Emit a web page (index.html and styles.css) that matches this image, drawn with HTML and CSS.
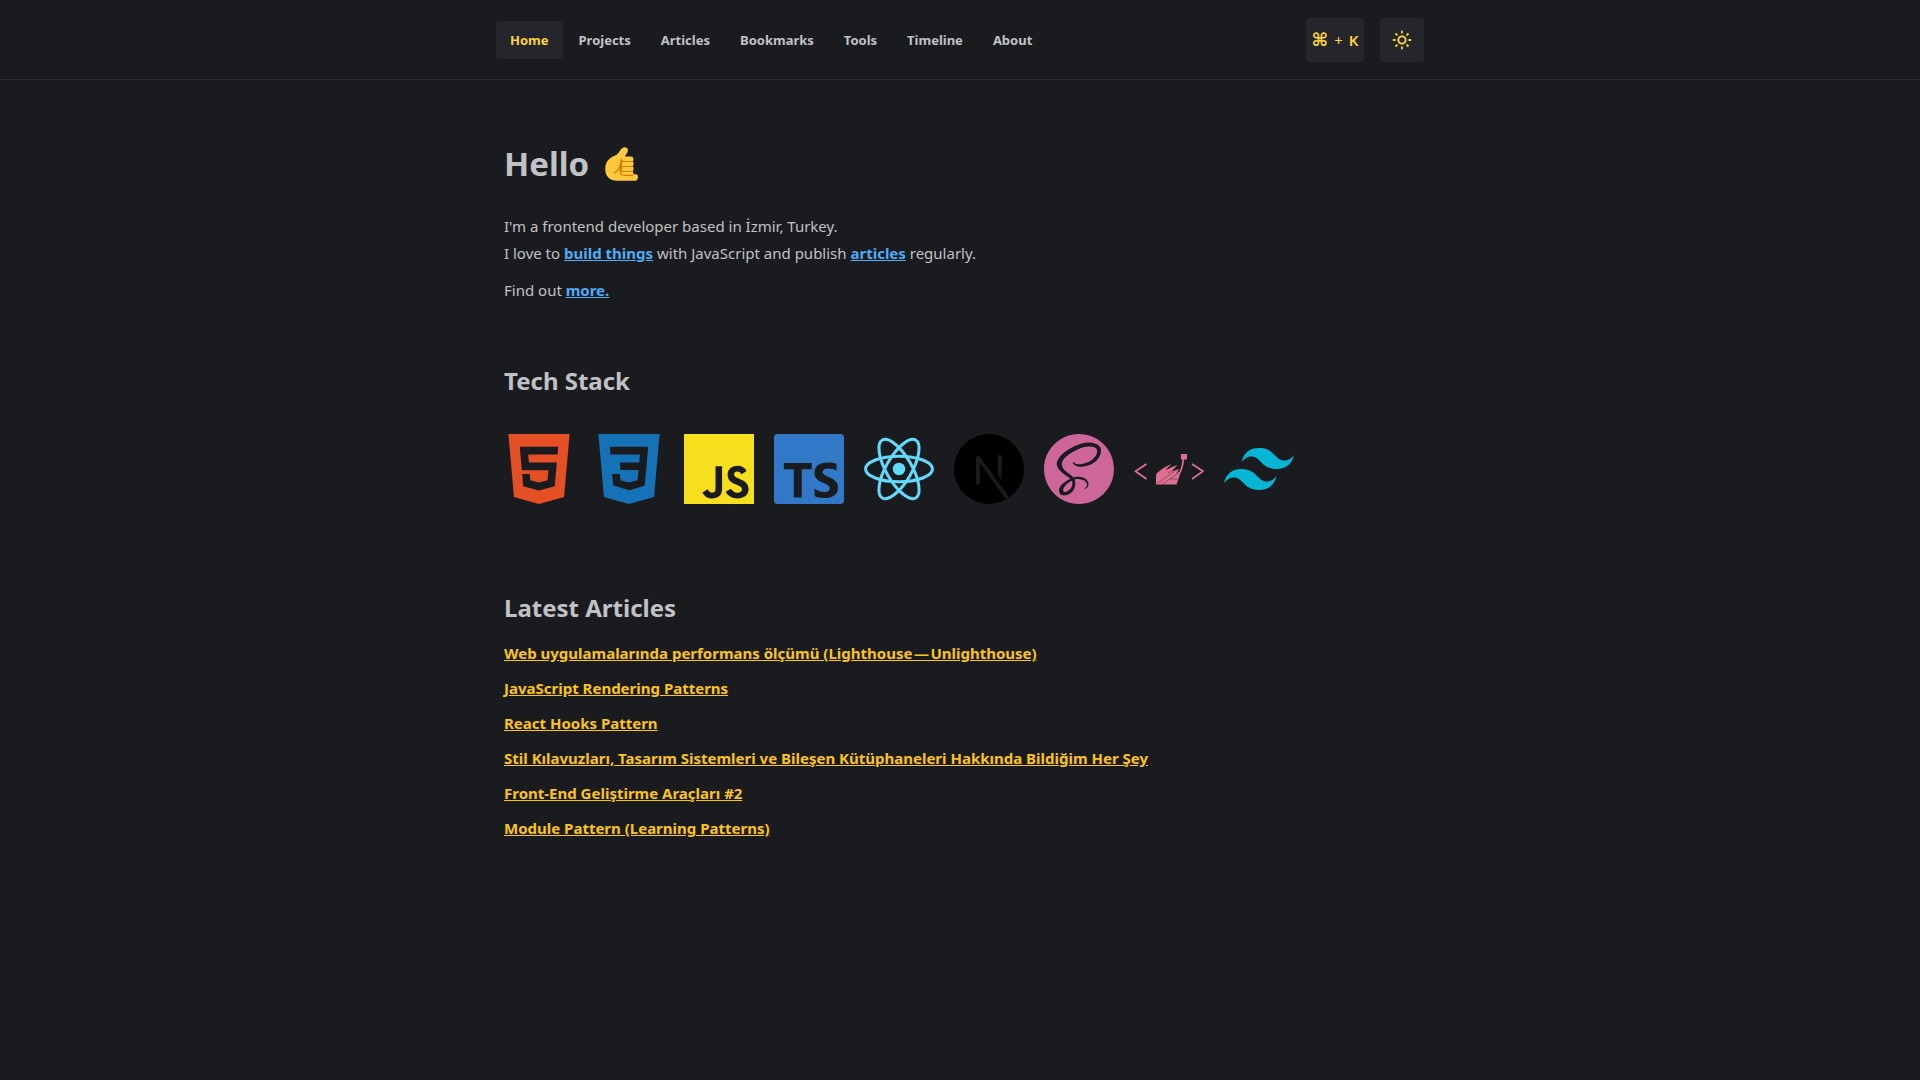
FILE: index.html
```html
<!DOCTYPE html>
<html lang="en">
<head>
<meta charset="utf-8">
<meta name="viewport" content="width=device-width, initial-scale=1">
<title>Home</title>
<link rel="stylesheet" href="styles.css">
</head>
<body>
<header class="header">
  <div class="container header-inner">
    <nav class="nav" aria-label="Main">
      <a class="nav-link active" href="#home" aria-current="page">Home</a>
      <a class="nav-link" href="#projects">Projects</a>
      <a class="nav-link" href="#articles">Articles</a>
      <a class="nav-link" href="#bookmarks">Bookmarks</a>
      <a class="nav-link" href="#tools">Tools</a>
      <a class="nav-link" href="#timeline">Timeline</a>
      <a class="nav-link" href="#about">About</a>
    </nav>
    <div class="actions">
      <button class="action shortcut" type="button" aria-label="Open command menu"><span class="cmd">⌘</span><span>+</span><b>K</b></button>
      <button class="action theme" type="button" aria-label="Toggle color scheme">
        <svg width="22" height="22" viewBox="0 0 24 24" fill="currentColor" aria-hidden="true"><path d="M6.993 12c0 2.761 2.246 5.007 5.007 5.007s5.007-2.246 5.007-5.007S14.761 6.993 12 6.993 6.993 9.239 6.993 12zM12 8.993c1.658 0 3.007 1.349 3.007 3.007S13.658 15.007 12 15.007 8.993 13.658 8.993 12 10.342 8.993 12 8.993zM10.998 19h2v3h-2zm0-17h2v3h-2zm-9 9h3v2h-3zm17 0h3v2h-3zM4.219 18.363l2.120-2.122 1.415 1.414-2.120 2.122zM16.240 6.344l2.122-2.122 1.414 1.414-2.122 2.122zM6.342 7.759 4.220 5.637l1.415-1.414 2.120 2.122zm13.434 10.605-1.414 1.414-2.122-2.122 1.414-1.414z"/></svg>
      </button>
    </div>
  </div>
</header>

<main class="container content">
  <section>
    <h1 class="title">Hello
      <svg class="hand" width="36" height="38" viewBox="0 0 36 38" role="img" aria-label="Call me hand">
        <path fill="#ffc83d" d="M16.500 6.500C18 3.500 20.500 1.800 23 2.500C25.300 3.300 25.300 5.500 24.300 7.500L21.800 11.500H28C30.800 11.500 31 15 29.700 16.200C30.900 17.500 30.900 19.800 29.700 21.200C30.900 22.600 30.900 25 29.700 26.200C30.400 27 30.500 28.200 30.200 29.200H33C35.800 29.600 35.700 35 32.500 35.700H14C7 35.700 2.300 31.500 2.300 24.500C2.300 18 4.500 14.800 9 12C12.500 10 15 9.500 16.500 6.500Z"/>
        <path fill="none" stroke="#d67d00" stroke-width="1.200" stroke-linecap="round" stroke-linejoin="round" d="M17.500 20C16.500 23 14 26.500 11.500 28M18.300 16.500H29.500M17.500 21.500H29.500M17 26.500H29.500M17 26.500C17 29.500 18.500 30.300 21 30.300H29.500"/>
        <path fill="#d67d00" d="M18 13L19.800 15.800L18.800 18.500L19.300 23.500L18.300 27L16.500 26L16.500 20Z"/>
      </svg>
    </h1>
    <p class="text">I'm a frontend developer based in İzmir, Turkey.<br>I love to <a class="link" href="#projects">build things</a> with JavaScript and publish <a class="link" href="#articles">articles</a> regularly.</p>
    <p class="text">Find out <a class="link" href="#about">more.</a></p>
  </section>

  <section class="stack">
    <h2 class="subtitle">Tech Stack</h2>
    <div class="logos">
      <svg class="logo" viewBox="0 0 24 24" role="img" aria-label="HTML5"><path fill="#e44f26" d="M1.500 0h21l-1.910 21.563L11.977 24l-8.564-2.438L1.500 0zm7.031 9.750l-.232-2.718 10.059.003.230-2.622L5.412 4.410l.698 8.010h9.126l-.326 3.426-2.910.804-2.955-.810-.188-2.110H6.248l.330 4.171L12 19.351l5.379-1.443.744-8.157H8.531z"/></svg>
      <svg class="logo" viewBox="0 0 24 24" role="img" aria-label="CSS3"><path fill="#1572b6" d="M1.500 0h21l-1.910 21.563L11.977 24l-8.565-2.438L1.500 0zm17.090 4.413L5.410 4.410l.213 2.622 10.125.002-.255 2.716h-6.640l.240 2.573h6.182l-.366 3.523-2.910.804-2.956-.810-.188-2.110h-2.610l.290 3.855L12 19.288l5.373-1.530L18.590 4.414z"/></svg>
      <svg class="logo" viewBox="0 0 256 256" role="img" aria-label="JavaScript"><path fill="#f7df1e" d="M0 0h256v256H0z"/><path fill="#1a1b1e" d="M67.312 213.932l19.590-11.856c3.780 6.701 7.218 12.371 15.465 12.371 7.905 0 12.890-3.092 12.890-15.120v-81.798h24.057v82.138c0 24.917-14.606 36.259-35.916 36.259-19.245 0-30.416-9.967-36.087-21.996M152.381 211.354l19.588-11.341c5.157 8.421 11.859 14.607 23.715 14.607 9.969 0 16.325-4.984 16.325-11.858 0-8.248-6.530-11.170-17.528-15.980l-6.013-2.579c-17.357-7.388-28.871-16.668-28.871-36.258 0-18.044 13.748-31.792 35.229-31.792 15.294 0 26.292 5.328 34.196 19.247L210.290 147.430c-4.125-7.389-8.591-10.310-15.465-10.310-7.046 0-11.514 4.468-11.514 10.310 0 7.217 4.468 10.141 14.778 14.608l6.014 2.577c20.450 8.765 31.966 17.700 31.966 37.804 0 21.654-17.012 33.510-39.867 33.510-22.339 0-36.774-10.654-43.819-24.574"/></svg>
      <svg class="logo" viewBox="0 0 24 24" role="img" aria-label="TypeScript"><path fill="#3178c6" d="M1.125 0C.502 0 0 .502 0 1.125v21.750C0 23.498.502 24 1.125 24h21.750c.623 0 1.125-.502 1.125-1.125V1.125C24 .502 23.498 0 22.875 0zm17.363 9.750c.612 0 1.154.037 1.627.111a6.380 6.380 0 0 1 1.306.340v2.458a3.950 3.950 0 0 0-.643-.361 5.093 5.093 0 0 0-.717-.260 5.453 5.453 0 0 0-1.426-.200c-.300 0-.573.028-.819.086a2.100 2.100 0 0 0-.623.242c-.170.104-.300.229-.393.374a.888.888 0 0 0-.140.490c0 .196.053.373.156.529.104.156.252.304.443.444s.423.276.696.410c.273.135.582.274.926.416.470.197.892.407 1.266.628.374.222.695.473.963.753.268.279.472.598.614.957.142.359.214.776.214 1.253 0 .657-.125 1.210-.373 1.656a3.033 3.033 0 0 1-1.012 1.085 4.380 4.380 0 0 1-1.487.596c-.566.120-1.163.180-1.790.180a9.916 9.916 0 0 1-1.840-.164 5.544 5.544 0 0 1-1.512-.493v-2.630a5.033 5.033 0 0 0 3.237 1.200c.333 0 .624-.030.872-.090.249-.060.456-.144.623-.250.166-.108.290-.234.373-.380a1.023 1.023 0 0 0-.074-1.089 2.120 2.120 0 0 0-.537-.500 5.597 5.597 0 0 0-.807-.444 27.720 27.720 0 0 0-1.007-.436c-.918-.383-1.602-.852-2.053-1.405-.450-.553-.676-1.222-.676-2.005 0-.614.123-1.141.369-1.582.246-.441.580-.804 1.004-1.089a4.494 4.494 0 0 1 1.470-.629 7.536 7.536 0 0 1 1.770-.201zm-15.113.188h9.563v2.166H9.506v9.646H6.789v-9.646H3.375z"/></svg>
      <svg class="logo" viewBox="-11.500 -11.500 23 23" role="img" aria-label="React"><circle r="2.050" fill="#61dafb"/><g fill="none" stroke="#61dafb"><ellipse rx="11" ry="4.200"/><ellipse rx="11" ry="4.200" transform="rotate(60)"/><ellipse rx="11" ry="4.200" transform="rotate(120)"/></g></svg>
      <svg class="logo" viewBox="0 0 70 70" role="img" aria-label="Next.js">
        <defs><linearGradient id="bar" x1="0" y1="0" x2="0" y2="1"><stop offset="0.500" stop-color="#1a1b1e"/><stop offset="1" stop-color="#1a1b1e" stop-opacity="0.600"/></linearGradient></defs>
        <circle cx="35" cy="35" r="35"/>
        <path fill="#1a1b1e" d="M22 24Q22 22 24 22Q25.200 22 26 23L55 63L52 65.500L26 29V49Q26 51 24 51Q22 51 22 49Z"/>
        <path fill="url(#bar)" d="M43.700 23Q43.700 21 45.700 21Q47.700 21 47.700 23V46.500L43.700 41Z"/>
      </svg>
      <svg class="logo" viewBox="0 0 24 24" role="img" aria-label="Sass"><path fill="#cd6799" d="M12 0c6.627 0 12 5.373 12 12s-5.373 12-12 12S0 18.627 0 12 5.373 0 12 0zM9.615 15.998c.175.645.156 1.248-.024 1.792l-.065.180c-.024.061-.052.120-.078.176-.140.290-.326.560-.555.810-.698.759-1.672 1.047-2.090.805-.450-.262-.226-1.335.584-2.190.871-.918 2.120-1.509 2.120-1.509v-.003l.108-.061zm9.911-10.861c-.542-2.133-4.077-2.834-7.422-1.645-1.989.707-4.144 1.818-5.693 3.267C4.568 8.480 4.275 9.980 4.396 10.607c.427 2.211 3.457 3.657 4.703 4.730v.006c-.367.180-3.056 1.529-3.686 2.925-.675 1.470.105 2.521.615 2.655 1.575.436 3.195-.360 4.065-1.649.840-1.261.766-2.881.404-3.676.496-.135 1.080-.195 1.830-.104 2.101.240 2.521 1.560 2.430 2.100-.090.539-.523.854-.674.944-.150.091-.195.120-.181.181.015.090.091.090.210.075.165-.030 1.096-.450 1.141-1.471.045-1.290-1.186-2.729-3.375-2.700-.900.016-1.471.091-1.875.256-.030-.045-.061-.075-.105-.105-1.350-1.455-3.855-2.475-3.750-4.410.030-.705.285-2.564 4.800-4.814 3.705-1.846 6.661-1.335 7.171-.210.733 1.604-1.576 4.590-5.431 5.024-1.470.165-2.235-.404-2.431-.615-.209-.225-.239-.240-.314-.194-.120.060-.045.255 0 .375.120.300.585.825 1.396 1.095.704.225 2.430.359 4.500-.450 2.324-.899 4.139-3.405 3.614-5.505l.073.067z"/></svg>
      <svg class="logo" viewBox="0 0 70 70" role="img" aria-label="styled-components">
        <g fill="none" stroke="#e0708f" stroke-width="1.700"><path d="M12.500 30L1.500 37.200L12.500 45M58 30L69 37.200L58 45"/><path d="M43 42.500Q48 38 49.500 25"/></g>
        <path fill="#e0708f" d="M47 20H53V25.500H47ZM22 50.500V40.500Q26 35 37.500 30L31 36.500Q37 33 43.500 31L37.500 37.500L45.500 35L42 39.500L45 38L45.500 42L42.500 50.500Z"/>
        <path fill="none" stroke="#1a1b1e" stroke-width="0.400" d="M23 49.500L40 37.500M29 50L44 39M34 37.500Q34 40 37 37M36 45H44"/>
      </svg>
      <svg class="logo" viewBox="0 0 24 24" role="img" aria-label="Tailwind CSS"><path fill="#07b6d5" d="M12.001 4.800c-3.200 0-5.200 1.600-6 4.800c1.200-1.600 2.600-2.200 4.200-1.800c.913.228 1.565.890 2.288 1.624C13.666 10.618 15.027 12 18.001 12c3.200 0 5.200-1.600 6-4.800c-1.200 1.600-2.600 2.200-4.200 1.800c-.913-.228-1.565-.890-2.288-1.624C16.337 6.182 14.976 4.800 12.001 4.800zM6.001 12c-3.200 0-5.200 1.600-6 4.800c1.200-1.600 2.600-2.200 4.200-1.800c.913.228 1.565.890 2.288 1.624c1.177 1.194 2.538 2.576 5.512 2.576c3.200 0 5.200-1.600 6-4.800c-1.200 1.600-2.600 2.200-4.200 1.800c-.913-.228-1.565-.890-2.288-1.624C10.337 13.382 8.976 12 6.001 12z"/></svg>
    </div>
  </section>

  <section class="articles">
    <h2 class="subtitle">Latest Articles</h2>
    <ul class="article-list">
      <li><a href="#a1">Web uygulamalarında performans ölçümü (Lighthouse&#8202;—&#8202;Unlighthouse)</a></li>
      <li><a href="#a2">JavaScript Rendering Patterns</a></li>
      <li><a href="#a3">React Hooks Pattern</a></li>
      <li><a href="#a4">Stil Kılavuzları, Tasarım Sistemleri ve Bileşen Kütüphaneleri Hakkında Bildiğim Her Şey</a></li>
      <li><a href="#a5">Front-End Geliştirme Araçları #2</a></li>
      <li><a href="#a6">Module Pattern (Learning Patterns)</a></li>
    </ul>
  </section>
</main>
</body>
</html>
```
FILE: styles.css
```css
* {
  box-sizing: border-box;
}

body {
  margin: 0;
  background: #1a1b1e;
  color: #c1c2c5;
  font-family: "Noto Sans", sans-serif;
  font-size: 15px;
  line-height: 27px;
}

.container {
  width: 100%;
  max-width: 960px;
  margin: 0 auto;
  padding: 0 16px;
}

.header {
  border-bottom: 1px solid #2c2e33;
}

.header-inner {
  display: flex;
  align-items: center;
  justify-content: space-between;
  padding-top: 18px;
  padding-bottom: 17px;
}

.nav {
  display: flex;
  flex-wrap: wrap;
  gap: 2px;
}

.nav-link {
  padding: 9px 14px;
  border-radius: 4px;
  color: #c1c2c5;
  font-size: 13px;
  font-weight: 700;
  line-height: 20px;
  text-decoration: none;
}

.nav-link.active {
  background: #25262b;
  color: #ffd43b;
}

.actions {
  display: flex;
  gap: 16px;
}

.action {
  display: flex;
  align-items: center;
  justify-content: center;
  height: 44px;
  padding: 0;
  border: 0;
  border-radius: 4px;
  background: #25262b;
  color: #ffd43b;
  font-family: inherit;
  font-size: 15px;
  line-height: 20px;
}

.shortcut {
  gap: 6px;
  width: 58px;
}

.shortcut b {
  font-weight: 600;
}

.cmd {
  font-family: "DejaVu Sans", sans-serif;
  font-size: 18px;
  font-weight: 700;
}

.theme {
  width: 44px;
}

.content {
  padding: 56px 24px;
}

.title,
.subtitle {
  margin: 0;
  font-weight: 700;
}

.title {
  display: flex;
  align-items: center;
  gap: 14px;
  margin-bottom: 21px;
  font-size: 33px;
  line-height: 56px;
}

.subtitle {
  font-size: 24px;
  line-height: 36px;
}

.text {
  margin: 0 0 10px;
}

.link {
  color: #4dabf7;
  font-weight: 700;
}

.stack {
  padding-top: 49px;
}

.logos {
  display: flex;
  flex-wrap: wrap;
  gap: 20px;
  padding: 35px 0 34px;
}

.logo {
  display: block;
  width: 70px;
  height: 70px;
}

.articles {
  padding-top: 52px;
}

.article-list {
  display: flex;
  flex-direction: column;
  gap: 8px;
  margin: 14px 0 0;
  padding: 0;
  list-style: none;
}

.article-list a {
  color: #fcc419;
  font-weight: 700;
}
```
